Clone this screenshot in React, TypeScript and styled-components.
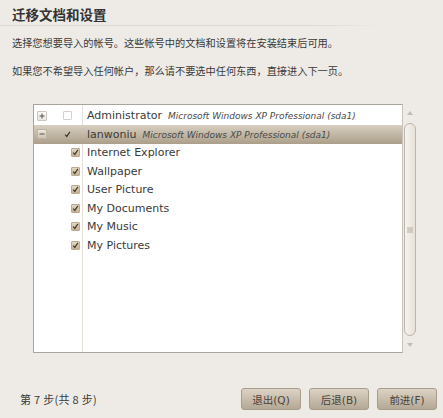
import React from 'react'
import styled, { createGlobalStyle } from 'styled-components'

const GlobalStyle = createGlobalStyle`
  html, body {
    margin: 0;
    padding: 0;
    background: #eeebe6;
  }
  body {
    font-family: "DejaVu Sans", "Noto Sans CJK SC", sans-serif;
    color: #3a3a3a;
  }
`

const Page = styled.div`
  width: 443px;
  height: 418px;
  background: #eeebe6;
  display: flex;
  flex-direction: column;
  overflow: hidden;
`

const Title = styled.h1`
  margin: 4px 0 0 12px;
  font-family: "Noto Sans CJK SC", sans-serif;
  font-size: 13.5px;
  line-height: 20px;
  font-weight: 700;
  color: #333;
`

const Rule = styled.div`
  height: 1px;
  margin: 1px 58px 0 0;
  background: linear-gradient(to right, #ddd7ce 0%, #ddd7ce 80%, rgba(221, 215, 206, 0) 100%);
`

const Paragraph = styled.p<{ $top: number }>`
  margin: ${(p) => p.$top}px 0 0 12px;
  font-family: "Noto Sans CJK SC", sans-serif;
  font-size: 10.2px;
  line-height: 14px;
  color: #3a3a3a;
`

const TreeArea = styled.div`
  display: flex;
  margin: 26px 26px 0 33px;
  height: 249px;
`

const TreeFrame = styled.div`
  flex: 1;
  background: #ffffff;
  border: 1px solid #aaa59c;
  border-right-color: #c9c4bb;
  padding-top: 1.5px;
  position: relative;
`

const Divider = styled.div`
  position: absolute;
  left: 48px;
  top: 0;
  bottom: 0;
  width: 1px;
  background: #e4e0d9;
`

const Row = styled.div<{ $selected?: boolean }>`
  display: grid;
  grid-template-columns: 21px 27px 1px 1fr;
  align-items: center;
  height: 18.5px;
  position: relative;
  z-index: 1;
  background: ${(p) => (p.$selected ? 'linear-gradient(#d8cfc1, #ab9f8a)' : 'transparent')};
`

const ExpanderCell = styled.div`
  display: flex;
  align-items: center;
  padding-left: 3px;
`

const Expander = styled.div<{ $selected?: boolean }>`
  width: 10px;
  height: 10px;
  box-sizing: border-box;
  border: 1px solid ${(p) => (p.$selected ? '#bdb3a2' : '#cbc6bd')};
  border-radius: 1px;
  background: ${(p) => (p.$selected ? 'linear-gradient(#ece6dc, #cfc5b5)' : 'linear-gradient(#fbfaf8, #e9e5df)')};
  display: flex;
  align-items: center;
  justify-content: center;
`

const CheckCell = styled.div<{ $indent: number }>`
  display: flex;
  align-items: center;
  padding-left: ${(p) => p.$indent}px;
`

const CheckBox = styled.div<{ $checked?: boolean; $bare?: boolean }>`
  width: 9px;
  height: 9px;
  box-sizing: border-box;
  border: 1px solid ${(p) => (p.$bare ? 'transparent' : p.$checked ? '#b9ab93' : '#d6d2cb')};
  border-radius: 1px;
  background: ${(p) =>
    p.$bare ? 'transparent' : p.$checked ? 'linear-gradient(#e3d6c0, #c6b495)' : '#ffffff'};
  display: flex;
  align-items: center;
  justify-content: center;
`

const Spacer = styled.div``

const Label = styled.div`
  padding-left: 4px;
  display: flex;
  align-items: baseline;
  gap: 6px;
  white-space: nowrap;
  overflow: hidden;
`

const Name = styled.span`
  font-size: 11px;
  color: #3a3a3a;
`

const Detail = styled.span`
  font-size: 9px;
  font-style: italic;
  color: #4a4a4a;
`

const Scrollbar = styled.div`
  width: 14px;
  display: flex;
  flex-direction: column;
  align-items: center;
  padding: 4px 0 3px;
  box-sizing: border-box;
`

const Arrow = styled.div`
  height: 10px;
  display: flex;
  align-items: center;
  justify-content: center;
`

const Thumb = styled.div`
  flex: 1;
  width: 12px;
  margin: 5px 0 4px;
  box-sizing: border-box;
  border: 1px solid #bdb5a9;
  border-radius: 6px;
  background: linear-gradient(to right, #f6f3ef, #e7e1d8);
  display: flex;
  align-items: center;
  justify-content: center;
`

const Footer = styled.div`
  display: flex;
  align-items: center;
  margin-top: auto;
  height: 22px;
  margin-bottom: 8px;
  padding: 0 6px 0 20px;
`

const Step = styled.span`
  flex: 1;
  font-family: "Noto Sans CJK SC", sans-serif;
  font-size: 11px;
  letter-spacing: 0.3px;
  color: #3a3a3a;
`

const Buttons = styled.div`
  display: flex;
  gap: 8px;
`

const Button = styled.button`
  width: 60px;
  height: 22px;
  padding: 0;
  box-sizing: border-box;
  border: 1px solid #a89d8a;
  border-radius: 3px;
  background: linear-gradient(#dcd3c5, #b4a895);
  font-family: "DejaVu Sans", "Noto Sans CJK SC", sans-serif;
  font-size: 10.5px;
  color: #4b4338;
`

const Check = ({ color = '#3d3830' }: { color?: string }) => (
  <svg width="9" height="9" viewBox="0 0 9 9">
    <path d="M1.5 4.6 L3.6 7 L7.6 1.2" fill="none" stroke={color} strokeWidth="1.5" />
  </svg>
)

const Sign = ({ plus }: { plus?: boolean }) => (
  <svg width="8" height="8" viewBox="0 0 8 8">
    <path d={plus ? 'M1.5 4 H6.5 M4 1.5 V6.5' : 'M1.5 4 H6.5'} stroke="#555049" strokeWidth="1" />
  </svg>
)

type Item = {
  name: string
  detail?: string
  expander?: 'plus' | 'minus'
  checked: boolean
  child?: boolean
  selected?: boolean
}

const items: Item[] = [
  { name: 'Administrator', detail: 'Microsoft Windows XP Professional (sda1)', expander: 'plus', checked: false },
  { name: 'lanwoniu', detail: 'Microsoft Windows XP Professional (sda1)', expander: 'minus', checked: true, selected: true },
  { name: 'Internet Explorer', checked: true, child: true },
  { name: 'Wallpaper', checked: true, child: true },
  { name: 'User Picture', checked: true, child: true },
  { name: 'My Documents', checked: true, child: true },
  { name: 'My Music', checked: true, child: true },
  { name: 'My Pictures', checked: true, child: true },
]

const App = () => (
  <Page>
    <GlobalStyle />
    <Title>迁移文档和设置</Title>
    <Rule />
    <Paragraph $top={10}>选择您想要导入的帐号。这些帐号中的文档和设置将在安装结束后可用。</Paragraph>
    <Paragraph $top={14}>如果您不希望导入任何帐户，那么请不要选中任何东西，直接进入下一页。</Paragraph>
    <TreeArea>
      <TreeFrame>
        <Divider />
        {items.map((it) => (
          <Row key={it.name} $selected={it.selected}>
            <ExpanderCell>
              {it.expander && (
                <Expander $selected={it.selected}>
                  <Sign plus={it.expander === 'plus'} />
                </Expander>
              )}
            </ExpanderCell>
            <CheckCell $indent={it.child ? 16 : 8}>
              <CheckBox $checked={it.checked} $bare={it.selected}>
                {it.checked && <Check />}
              </CheckBox>
            </CheckCell>
            <Spacer />
            <Label>
              <Name>{it.name}</Name>
              {it.detail && <Detail>{it.detail}</Detail>}
            </Label>
          </Row>
        ))}
      </TreeFrame>
      <Scrollbar>
        <Arrow>
          <svg width="6" height="4" viewBox="0 0 6 4">
            <path d="M0 4 L3 0 L6 4 Z" fill="#c3bcb1" />
          </svg>
        </Arrow>
        <Thumb>
          <svg width="6" height="6" viewBox="0 0 6 6">
            <path d="M0 1 H6 M0 3 H6 M0 5 H6" stroke="#b3aa9d" strokeWidth="1" />
          </svg>
        </Thumb>
        <Arrow>
          <svg width="6" height="4" viewBox="0 0 6 4">
            <path d="M0 0 L3 4 L6 0 Z" fill="#c3bcb1" />
          </svg>
        </Arrow>
      </Scrollbar>
    </TreeArea>
    <Footer>
      <Step>第 7 步(共 8 步)</Step>
      <Buttons>
        <Button>退出(Q)</Button>
        <Button>后退(B)</Button>
        <Button>前进(F)</Button>
      </Buttons>
    </Footer>
  </Page>
)

export default App
